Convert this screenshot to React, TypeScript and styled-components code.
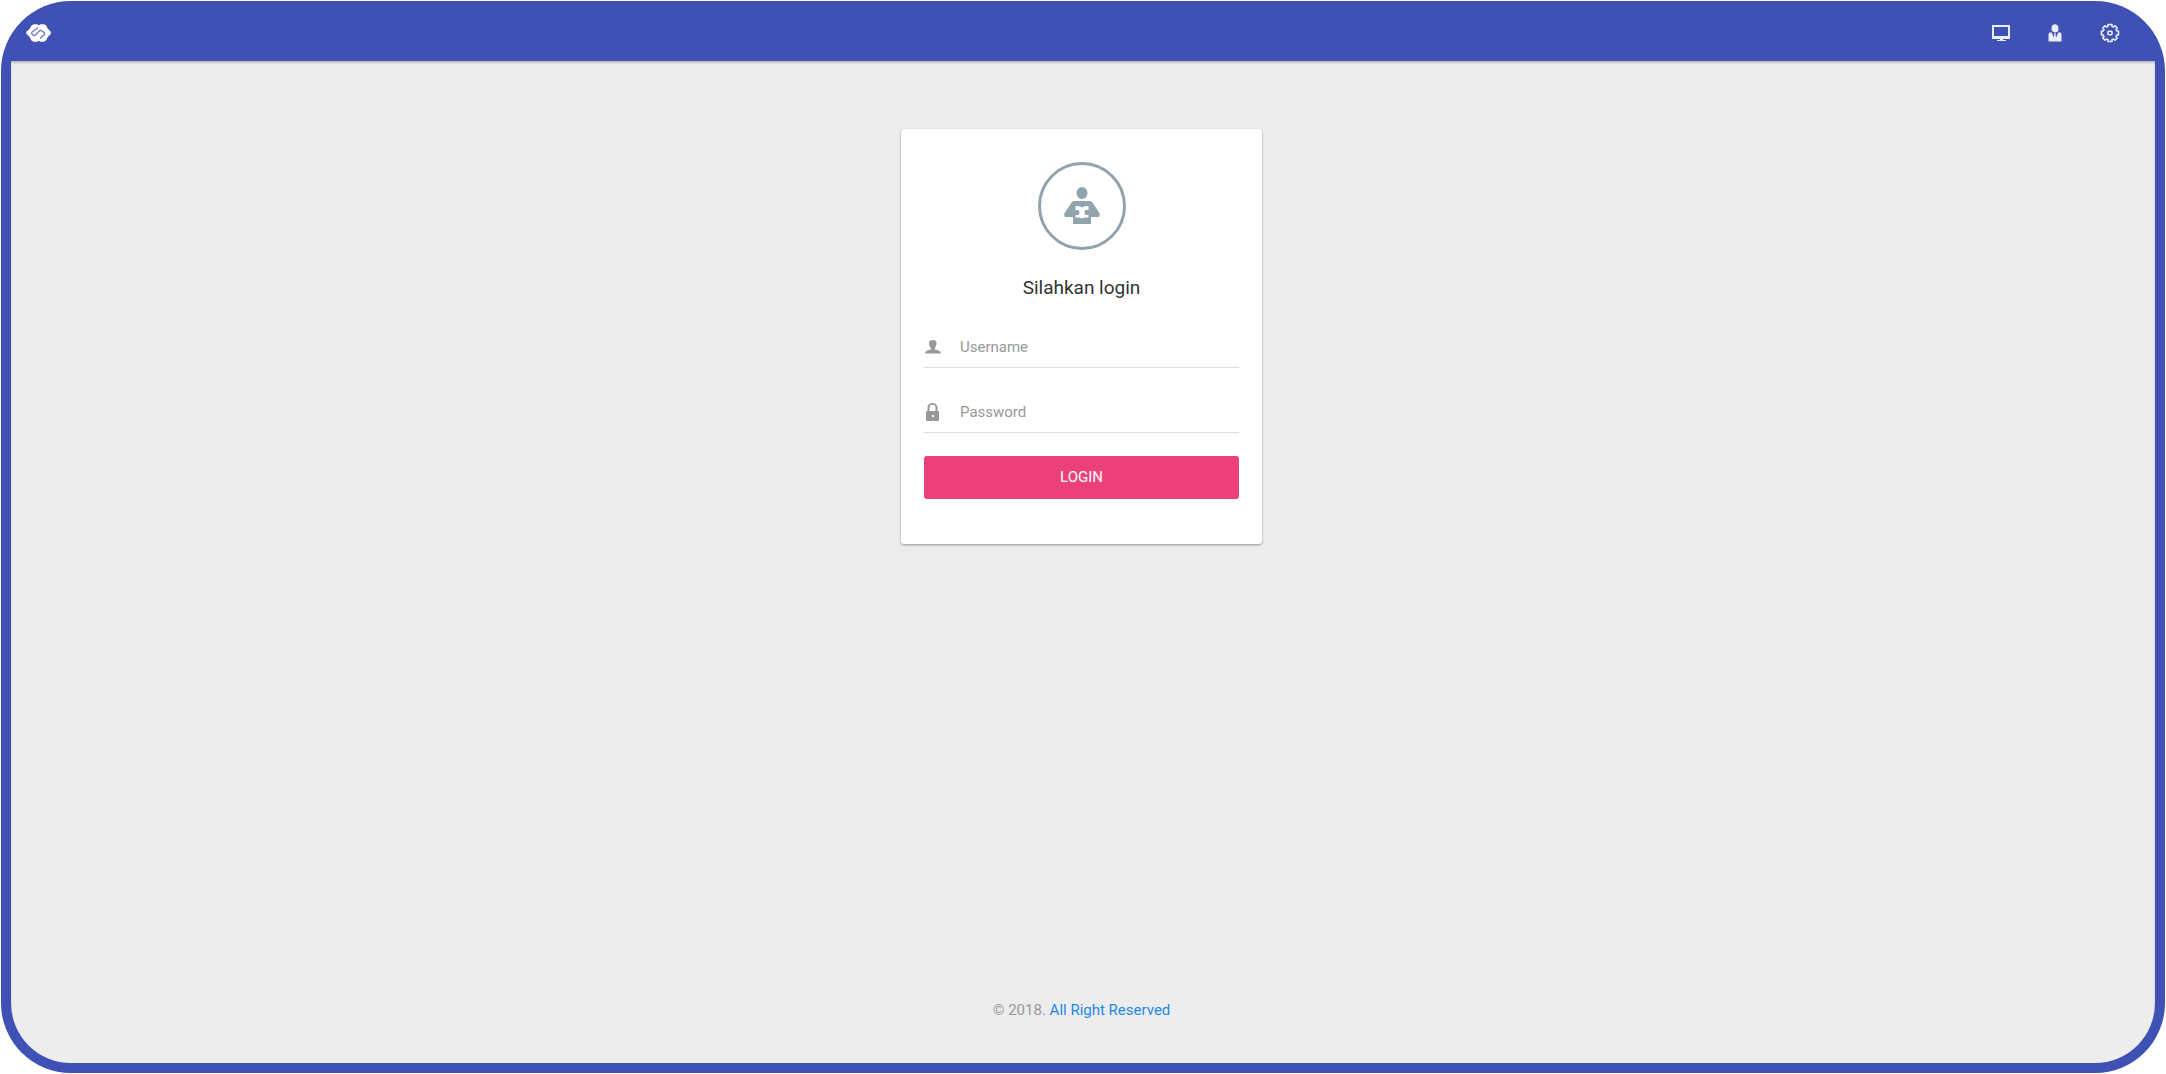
import React from "react";
import styled, { createGlobalStyle } from "styled-components";

const indigo = "#3f51b5";
const sans = `Roboto, "Liberation Sans", sans-serif`;

const GlobalStyle = createGlobalStyle`
  * { box-sizing: border-box; }
  body { margin: 0; background: #fff; font-family: ${sans}; color: #333; }
`;

const Frame = styled.div`
  display: flex;
  flex-direction: column;
  min-height: calc(100vh - 2px);
  margin: 1px;
  padding: 0 10px 10px;
  border-radius: 70px;
  background: ${indigo};
`;

const TopBar = styled.header`
  display: flex;
  align-items: center;
  justify-content: space-between;
  height: 60px;
  padding: 4px 35px 0 15px;
`;

const Brand = styled.a`
  display: flex;
  color: #fff;
`;

const Nav = styled.nav`
  display: flex;
  align-items: center;
  gap: 36px;
`;

const NavLink = styled.a`
  display: flex;
  color: #eceefa;
`;

const Main = styled.main`
  display: flex;
  flex: 1;
  flex-direction: column;
  align-items: center;
  justify-content: space-between;
  padding: 68px 3px 43px 0;
  border-radius: 0 0 60px 60px;
  background: #ededed;
  box-shadow: inset 0 2px 2px rgba(0, 0, 0, 0.2);
`;

const Card = styled.form`
  display: flex;
  flex-direction: column;
  width: 361px;
  max-width: 100%;
  padding: 33px 23px 45px;
  border-radius: 3px;
  background: #fff;
  box-shadow: 0 1px 3px rgba(0, 0, 0, 0.2), 0 1px 2px rgba(0, 0, 0, 0.2);
`;

const Emblem = styled.div`
  display: flex;
  align-items: center;
  justify-content: center;
  align-self: center;
  width: 88px;
  height: 88px;
  padding-bottom: 2px;
  border: 3px solid #90a4ae;
  border-radius: 50%;
  color: #90a4ae;
`;

const Title = styled.h1`
  margin: 24px 0 25px;
  font-size: 19px;
  line-height: 28px;
  font-weight: 400;
  text-align: center;
`;

const Field = styled.label`
  display: flex;
  align-items: center;
  height: 41px;
  border-bottom: 1px solid #ddd;
  color: #999;
  & + & {
    margin-top: 24px;
  }
`;

const FieldIcon = styled.span`
  display: flex;
  width: 36px;
`;

const Input = styled.input`
  flex: 1;
  min-width: 0;
  height: 40px;
  padding: 0;
  border: 0;
  outline: 0;
  background: transparent;
  color: #333;
  font-family: ${sans};
  font-size: 15px;
  &::placeholder {
    color: #999;
    opacity: 1;
  }
`;

const Submit = styled.button`
  height: 43px;
  margin-top: 23px;
  padding: 0 0 2px;
  border: 0;
  border-radius: 3px;
  background: #ec407a;
  color: #fff;
  font-family: ${sans};
  font-size: 15px;
  font-weight: 400;
  cursor: pointer;
`;

const Footer = styled.footer`
  font-size: 15px;
  line-height: 20px;
  color: #999;
`;

const FooterLink = styled.a`
  color: #1e88e5;
  text-decoration: none;
`;

const LogoMark = () => (
  <svg width="26" height="20" viewBox="0 0 26 20" fill="none">
    <path d="M8 2h2.800l2 1.400L14.800 2h3l2 1.200 1.300 3L24 9v1.600l-3 3-1.600 3.200-2 1.200h-2.600l-2-1.400L10.800 18H8l-2-1.200-1.500-3.200L1.200 10.500V9.200l3.300-3L6 3.200z" fill="currentColor" stroke="currentColor" strokeWidth="1.600" strokeLinejoin="round" />
    <path d="M12 4.500 6 9.200q-1 .9 0 1.800l1.200 1.200q1 .7 2 0l4.300-4.400q1-.9 2 0l2.700 1.800q.9.900 0 1.800L14 15.500" stroke={indigo} strokeOpacity=".75" strokeWidth="1.400" />
  </svg>
);

const MonitorIcon = () => (
  <svg width="18" height="18" viewBox="0 0 18 18" fill="currentColor">
    <path fillRule="evenodd" d="M0 1h18v14h-7v1h3v1H5v-1h3v-1H0zM2 3v9h14V3z" />
  </svg>
);

const UserTieIcon = () => (
  <svg width="18" height="18" viewBox="0 0 18 18" fill="currentColor">
    <path d="M5.500 4c0-5 7-5 7 0S10.500 8 9 8 5.500 8 5.500 4zM2.500 17.500V10l1-1.500h2.300L8 14l.6-4L8 8.500h2L9.400 10l.6 4 2.200-5.500h2.300l1 1.500v7.500z" />
    <path d="m8.600 10-.9 4L9 16l1.300-2-.9-4z" fillOpacity=".7" />
  </svg>
);

const GearIcon = () => (
  <svg width="20" height="20" viewBox="0 0 20 20" fill="none" stroke="currentColor" strokeWidth="1.600" strokeLinejoin="round">
    <path d="M8 1.500h4v1.800l1.500.7L15 2.800 17.200 5 16 6.500l.7 1.500h1.800v4h-1.800l-.7 1.500 1.200 1.500-2.200 2.200-1.500-1.200-1.500.7v1.800H8v-1.800L6.500 16 5 17.200 2.800 15 4 13.500 3.300 12H1.500V8h1.800L4 6.500 2.800 5 5 2.800 6.500 4 8 3.300z" />
    <rect x="8" y="8.300" width="4" height="3.400" rx="1" />
  </svg>
);

const ReaderIcon = () => (
  <svg width="36" height="37" viewBox="0 0 36 37" fill="currentColor">
    <ellipse cx="18" cy="6" rx="5.500" ry="6" />
    <path fillRule="evenodd" d="M10 14h16q1.500 0 2.500 1.500L36 27l-1 3h-8v7H9v-7H1l-1-3 7.500-11.500Q8.500 14 10 14zM11.500 19v4H14q1.500 0 1.500 2V26q0 2-1.500 2h-2.500v2.500Q16 30 18 31.500q2-1.500 6.500-1V28H22q-1.500 0-1.500-2v-1q0-2 1.500-2h2.500v-4Q20 18.700 18 20.500q-2-1.800-6.500-1.500z" />
  </svg>
);

const UserIcon = () => (
  <svg width="18" height="18" viewBox="0 0 18 18" fill="currentColor">
    <path d="M5 5.500C5 3 6 2 8.800 2s3.700 1 3.700 3.500c0 2-.8 3.700-1.800 4.700v1.300c3 .3 6.300 1.500 6.300 4H1c0-2.500 3.300-3.700 6-4v-1.300C6 9.200 5 7.500 5 5.500z" />
  </svg>
);

const LockIcon = () => (
  <svg width="18" height="18" viewBox="0 0 18 18" fill="currentColor">
    <path fillRule="evenodd" d="M3.500 8V4.500a5 4.500 0 0 1 10 0V8H14q1 0 1 1v8q0 1-1 1H3q-1 0-1-1V9q0-1 1-1zm2 0h6V4.500a3 2.700 0 0 0-6 0zm2.500 4v2h2v-2z" />
  </svg>
);

export default function App() {
  return (
    <>
      <GlobalStyle />
      <Frame>
        <TopBar>
          <Brand href="#" aria-label="Home"><LogoMark /></Brand>
          <Nav>
            <NavLink href="#" aria-label="Display"><MonitorIcon /></NavLink>
            <NavLink href="#" aria-label="Account"><UserTieIcon /></NavLink>
            <NavLink href="#" aria-label="Settings"><GearIcon /></NavLink>
          </Nav>
        </TopBar>
        <Main>
          <Card onSubmit={(event) => event.preventDefault()}>
            <Emblem><ReaderIcon /></Emblem>
            <Title>Silahkan login</Title>
            <Field>
              <FieldIcon><UserIcon /></FieldIcon>
              <Input type="text" placeholder="Username" aria-label="Username" />
            </Field>
            <Field>
              <FieldIcon><LockIcon /></FieldIcon>
              <Input type="password" placeholder="Password" aria-label="Password" />
            </Field>
            <Submit type="submit">LOGIN</Submit>
          </Card>
          <Footer>
            © 2018. <FooterLink href="#">All Right Reserved</FooterLink>
          </Footer>
        </Main>
      </Frame>
    </>
  );
}
